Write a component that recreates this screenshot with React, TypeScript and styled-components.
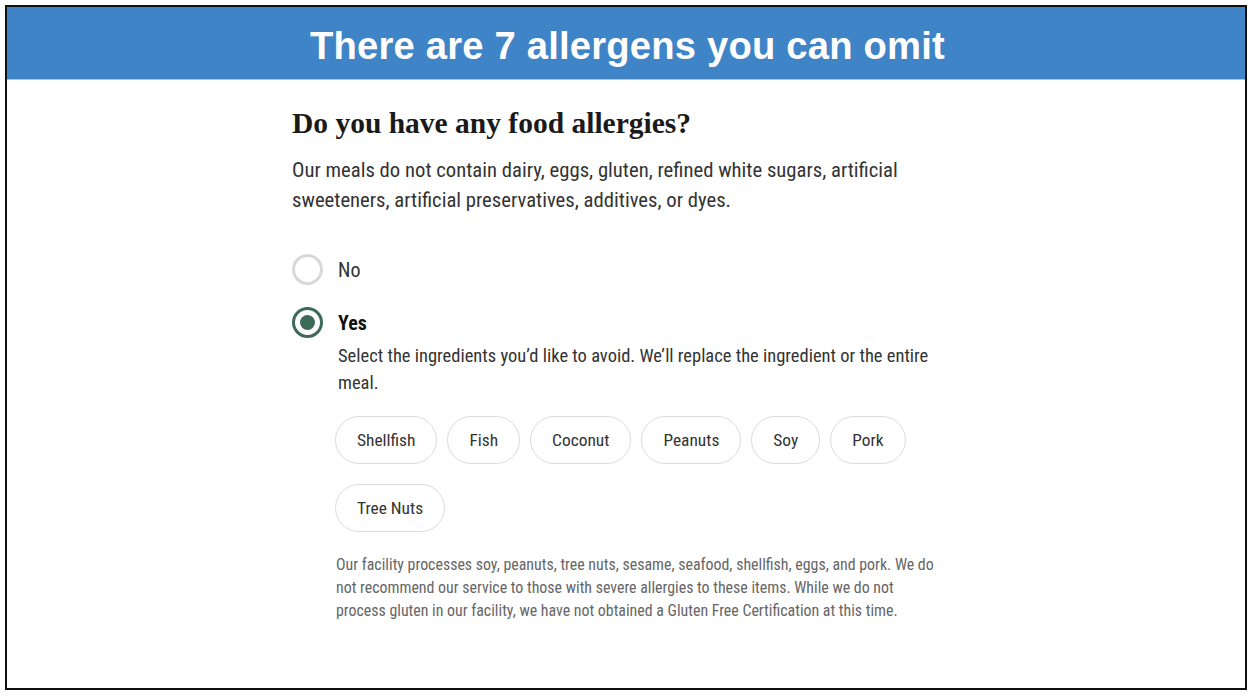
import styled, { createGlobalStyle } from "styled-components";

const allergens = ["Shellfish", "Fish", "Coconut", "Peanuts", "Soy", "Pork", "Tree Nuts"];

const condensed = `"Roboto Condensed", "Liberation Sans Narrow", "DejaVu Sans Condensed", sans-serif`;

function App() {
  return (
    <>
      <GlobalStyle />
      <Frame>
        <Banner>
          <BannerTitle>There are 7 allergens you can omit</BannerTitle>
        </Banner>
        <Content>
          <Question>Do you have any food allergies?</Question>
          <Intro>
            Our meals do not contain dairy, eggs, gluten, refined white sugars, artificial
            sweeteners, artificial preservatives, additives, or dyes.
          </Intro>
          <Options>
            <Option>
              <Radio $checked={false} />
              <OptionLabel $checked={false}>No</OptionLabel>
            </Option>
            <Option>
              <Radio $checked />
              <OptionLabel $checked>Yes</OptionLabel>
            </Option>
          </Options>
          <Details>
            <Hint>
              Select the ingredients you’d like to avoid. We’ll replace the ingredient or the entire
              meal.
            </Hint>
            <Chips>
              {allergens.map((name) => (
                <Chip key={name}>{name}</Chip>
              ))}
            </Chips>
            <Note>
              Our facility processes soy, peanuts, tree nuts, sesame, seafood, shellfish, eggs, and
              pork. We do not recommend our service to those with severe allergies to these items.
              While we do not process gluten in our facility, we have not obtained a Gluten Free
              Certification at this time.
            </Note>
          </Details>
        </Content>
      </Frame>
    </>
  );
}

export default App;

const GlobalStyle = createGlobalStyle`
  body {
    margin: 5px;
    background: #ffffff;
  }
`;

const Frame = styled.div`
  width: 1242px;
  height: 685px;
  box-sizing: border-box;
  border: 2px solid #111;
  background: #fff;
`;

const Banner = styled.header`
  height: 73px;
  padding-top: 5px;
  box-sizing: border-box;
  background: #3f84c6;
  border-bottom: 1px solid #a8c6e4;
  display: flex;
  align-items: center;
  justify-content: center;
`;

const BannerTitle = styled.h1`
  margin: 0 0 0 3px;
  color: #fff;
  font-family: "Liberation Sans", Arial, sans-serif;
  font-weight: bold;
  font-size: 38.2px;
  letter-spacing: 0.2px;
`;

const Content = styled.main`
  padding: 26px 0 0 285px;
  width: 650px;
`;

const Question = styled.h2`
  margin: 0;
  font-family: "Liberation Serif", "DejaVu Serif", serif;
  font-weight: bold;
  font-size: 29.5px;
  line-height: 34px;
  color: #1a1a1a;
`;

const Intro = styled.p`
  margin: 15px 0 0;
  font-family: ${condensed};
  font-size: 20.7px;
  line-height: 30px;
  color: #333;
`;

const Options = styled.div`
  margin-top: 39px;
  display: flex;
  flex-direction: column;
  gap: 22px;
`;

const Option = styled.div`
  display: flex;
  align-items: center;
  gap: 15px;
`;

const Radio = styled.span<{ $checked: boolean }>`
  width: 31px;
  height: 31px;
  box-sizing: border-box;
  border-radius: 50%;
  border: 3px solid ${({ $checked }) => ($checked ? "#3e6b57" : "#d6d9d8")};
  display: flex;
  align-items: center;
  justify-content: center;
  &::after {
    content: "";
    display: ${({ $checked }) => ($checked ? "block" : "none")};
    width: 15px;
    height: 15px;
    border-radius: 50%;
    background: #3e6b57;
  }
`;

const OptionLabel = styled.span<{ $checked: boolean }>`
  font-family: ${condensed};
  font-size: 20px;
  font-weight: ${({ $checked }) => ($checked ? "bold" : "normal")};
  color: ${({ $checked }) => ($checked ? "#111" : "#333")};
`;

const Details = styled.div`
  padding-left: 43px;
  width: 602px;
`;

const Hint = styled.p`
  margin: 5px 0 0 3px;
  font-family: ${condensed};
  font-size: 18.5px;
  line-height: 27px;
  color: #333;
`;

const Chips = styled.div`
  margin-top: 19px;
  display: flex;
  flex-wrap: wrap;
  gap: 20px 10px;
`;

const Chip = styled.button`
  height: 48px;
  padding: 0 21px;
  border: 1px solid #dcdcdc;
  border-radius: 25px;
  background: #fff;
  font-family: ${condensed};
  font-size: 17.4px;
  color: #333;
`;

const Note = styled.p`
  margin: 21px 0 0 1px;
  font-family: ${condensed};
  font-size: 15.9px;
  line-height: 23px;
  color: #666;
`;
